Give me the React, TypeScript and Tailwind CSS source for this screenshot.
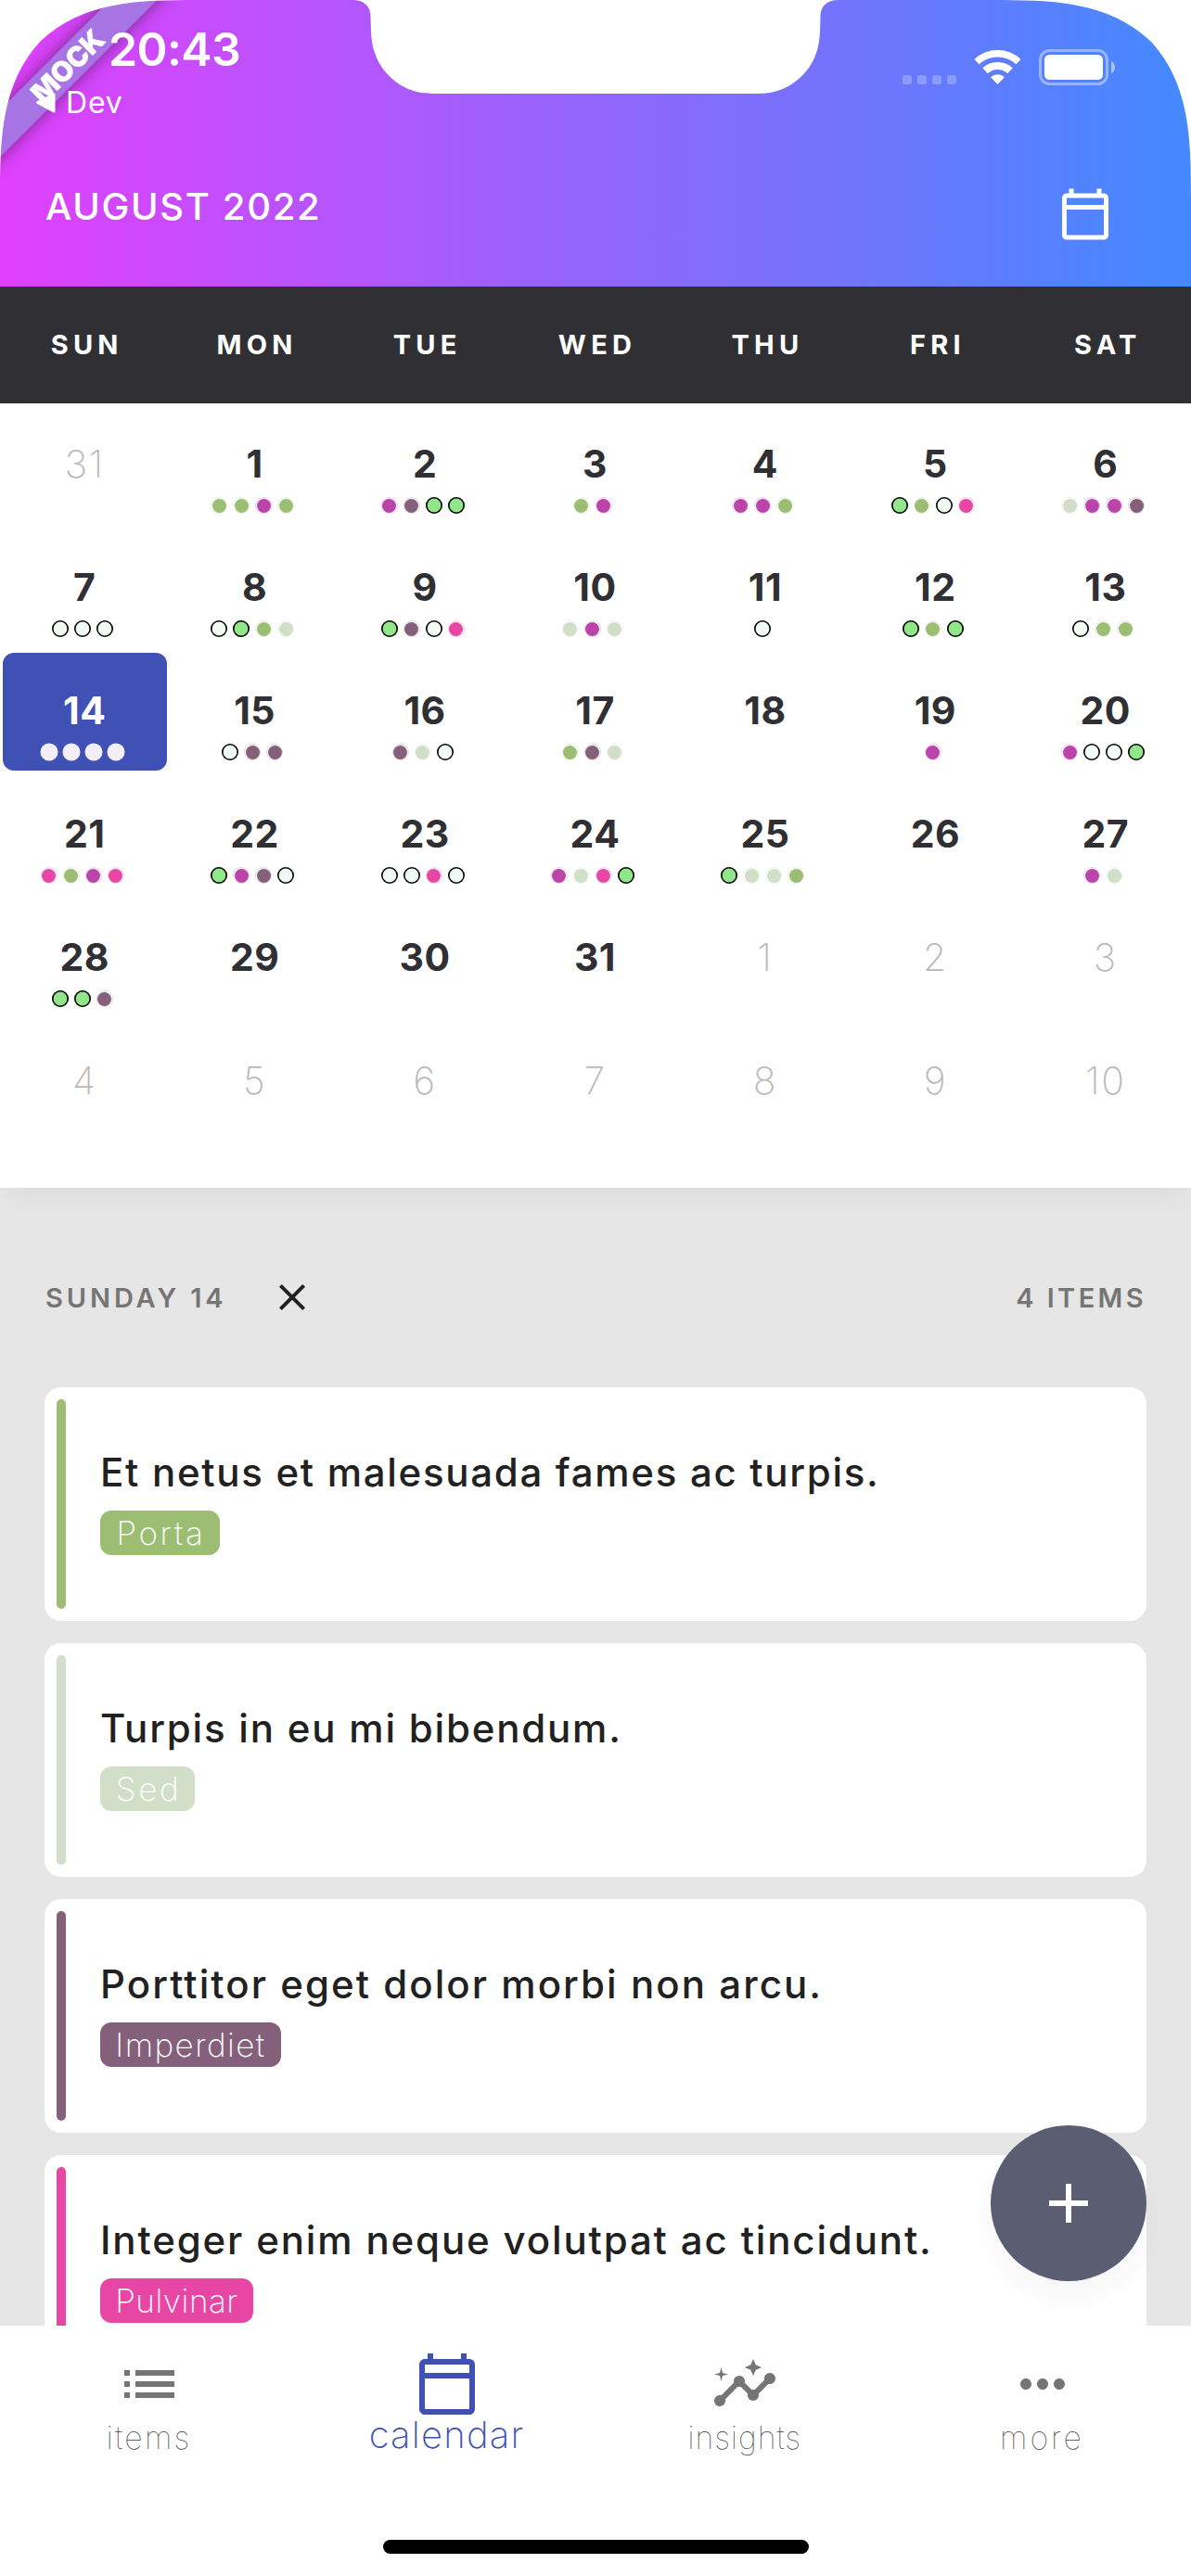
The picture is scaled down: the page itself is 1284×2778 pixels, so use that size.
import { MdAdd, MdClose, MdInsights, MdList, MdMoreHoriz } from "react-icons/md";

type Tone = "olive" | "orchid" | "plum" | "sage" | "pink" | "mint" | "hollow" | "light";

const toneRing: Record<Tone, string> = {
  olive: "border border-[#9bbe72]/25",
  orchid: "border border-[#bb44ab]/25",
  plum: "border border-[#85607b]/25",
  sage: "border border-[#d1dfc8]/40",
  pink: "border border-[#e846a5]/25",
  mint: "bg-[#92e68a] shadow-[inset_0_0_0_1.6px_#000]",
  hollow: "bg-[#f3fcf4] shadow-[inset_0_0_0_1.6px_#000]",
  light: "bg-[#f2eff6] shadow-[0_0_0_0.5px_#f2eff6]",
};

const toneCore: Record<Tone, string> = {
  olive: "bg-[#9bbe72]",
  orchid: "bg-[#bb44ab]",
  plum: "bg-[#85607b]",
  sage: "bg-[#d1dfc8]",
  pink: "bg-[#e846a5]",
  mint: "hidden",
  hollow: "hidden",
  light: "hidden",
};

const codes: Record<string, Tone> = {
  o: "olive", r: "orchid", p: "plum", s: "sage", k: "pink", m: "mint", h: "hollow", w: "light",
};

const weekdays = ["SUN", "MON", "TUE", "WED", "THU", "FRI", "SAT"];

const augustDots = [
  "ooro", "rpmm", "or", "rro", "mohk", "srrp",
  "hhh", "hmos", "mphk", "srs", "h", "mom", "hoo",
  "wwww", "hpp", "psh", "ops", "", "r", "rhhm",
  "kork", "mrph", "hhkh", "rskm", "msso", "", "rs",
  "mmp", "", "", "",
];

const days = [
  { n: 31, dots: "", outside: true },
  ...augustDots.map((dots, i) => ({ n: i + 1, dots, outside: false })),
  ...Array.from({ length: 10 }, (_, i) => ({ n: i + 1, dots: "", outside: true })),
];

const items = [
  { title: "Et netus et malesuada fames ac turpis.", tracking: "tracking-[1.7px]", tag: "Porta", tagClass: "w-[129px] tracking-[2.6px] pl-[2px]", bg: "bg-[#9bbe72]" },
  { title: "Turpis in eu mi bibendum.", tracking: "tracking-[1.8px]", tag: "Sed", tagClass: "w-[102px] tracking-[2.6px] pl-[2px]", bg: "bg-[#d1dfc8]" },
  { title: "Porttitor eget dolor morbi non arcu.", tracking: "tracking-[2.05px]", tag: "Imperdiet", tagClass: "w-[195px] tracking-[1.4px]", bg: "bg-[#85607b]" },
  { title: "Integer enim neque volutpat ac tincidunt.", tracking: "tracking-[1.85px]", tag: "Pulvinar", tagClass: "w-[165px] tracking-[0.5px]", bg: "bg-[#e846a5]" },
];

function CalendarIcon({ className }: { className: string }) {
  return (
    <svg viewBox="0 0 24 24" fill="currentColor" className={className}>
      <path d="M20 3h-1V1h-2v2H7V1H5v2H4c-1.1 0-2 .9-2 2v16c0 1.1.9 2 2 2h16c1.1 0 2-.9 2-2V5c0-1.1-.9-2-2-2zm0 18H4V10h16v11zm0-13H4V5h16v3z" />
    </svg>
  );
}

function ScreenCutout() {
  return (
    <svg viewBox="0 0 1284 220" fill="white" className="absolute inset-x-0 top-0 h-[220px] w-[1284px]">
      <path d="M0 0V215C0 150 1 90 44 44C90 1 150 0 215 0Z" />
      <path d="M1284 0V215C1284 150 1283 90 1240 44C1194 1 1134 0 1069 0Z" />
      <path d="M380 0C393 0 399.500 7 399.500 18C400 36 400 46 404 57C411 79 431 94 446 98C455 101 465 101 475 101H809C819 101 829 101 838 98C853 94 873 79 880 57C884 46 884 36 884.500 18C884.500 7 891 0 904 0Z" />
    </svg>
  );
}

function Header() {
  return (
    <header className="relative flex h-[309px] shrink-0 flex-col overflow-hidden bg-linear-to-r/srgb from-[#e040fb] to-[#448aff] text-white">
      <div className="absolute -left-[78.500px] top-[53.500px] flex h-[36px] w-[300px] -rotate-45 items-center justify-center bg-[#a675e3] shadow-[0_0_18px_rgba(0,0,0,0.45)]">
        <span className="pl-[2px] text-[30.5px] font-black leading-none tracking-[-0.5px]">MOCK</span>
      </div>
      <ScreenCutout />
      <div className="relative flex h-[150px] justify-between pr-[82px]">
        <div className="pl-[38px] pt-[23px]">
          <div className="h-[60px] pl-[79px] text-[50px] font-semibold leading-[60px] tracking-[-0.6px]">20:43</div>
          <div className="mt-[8px] flex h-10 items-center">
            <svg viewBox="0 0 22 24" className="h-6 w-[22px]">
              <path d="M2.500 11.500L20 3V21Z" fill="white" stroke="white" strokeWidth="3" strokeLinejoin="round" />
            </svg>
            <span className="ml-[11px] text-[32px] leading-none tracking-[0.8px]">Dev</span>
          </div>
        </div>
        <div className="flex items-start">
          <div className="mt-[81px] flex gap-1.5">
            {[0, 1, 2, 3].map((i) => (
              <span key={i} className="size-2.5 rounded-[3px] bg-white/25" />
            ))}
          </div>
          <svg viewBox="0 0 51 37" className="ml-[19px] mt-[54px] h-[37px] w-[51px]" fill="none" stroke="white">
            <path d="M3 12.600A33 33 0 0 1 48 12.600" strokeWidth="7.400" />
            <path d="M12 22.200A19.800 19.800 0 0 1 39 22.200" strokeWidth="8" />
            <path d="M25.500 37L18 29.200A11 11 0 0 1 33 29.200Z" fill="white" stroke="none" />
          </svg>
          <svg viewBox="0 0 82 39" className="ml-[19px] mt-[53px] h-[39px] w-[82px]">
            <rect x="1.500" y="1.500" width="72" height="36" rx="10" fill="none" stroke="white" strokeOpacity="0.4" strokeWidth="3" />
            <rect x="6" y="6" width="63" height="27" rx="5.500" fill="white" />
            <path d="M78 13C83.300 15 83.300 24 78 26Z" fill="white" fillOpacity="0.5" />
          </svg>
        </div>
      </div>
      <div className="relative flex h-[146px] items-center justify-between pl-[49px] pr-[84px]">
        <h1 className="text-[40px] font-medium leading-none tracking-[1.65px]">AUGUST 2022</h1>
        <CalendarIcon className="mt-[15px] size-[60px]" />
      </div>
    </header>
  );
}

function Day({ n, dots, outside }: { n: number; dots: string; outside: boolean }) {
  const selected = !outside && n === 14;
  return (
    <div className="h-[133px] p-[3px]">
      <div className={`flex h-[127px] flex-col items-center rounded-[12px] pr-px pt-[38px] ${selected ? "bg-[#3f51b5]" : ""}`}>
        <span
          className={`h-12 text-[41px] leading-[48px] ${
            outside
              ? "font-extralight tracking-[1.5px] text-[#b9b9bb]"
              : selected
                ? "font-bold tracking-[0.5px] text-white"
                : "font-bold tracking-[0.5px] text-[#302f34]"
          }`}
        >
          {n}
        </span>
        <div className="mt-[12px] flex gap-1.5 pr-[5px]">
          {dots.split("").map((c, i) => (
            <span key={i} className={`flex size-[18px] items-center justify-center rounded-full ${toneRing[codes[c]]}`}>
              <span className={`size-[15px] shrink-0 rounded-full ${toneCore[codes[c]]}`} />
            </span>
          ))}
        </div>
      </div>
    </div>
  );
}

export default function App() {
  return (
    <div className="relative flex h-[2778px] w-[1284px] flex-col overflow-hidden bg-white font-['Inter',sans-serif]">
      <Header />
      <div className="grid h-[126px] shrink-0 grid-cols-7 items-center bg-[#302f34] pb-[2px] text-center text-[29px] font-bold text-white">
        {weekdays.map((d) => (
          <span key={d} className="pl-[4px] leading-none tracking-[5.2px]">{d}</span>
        ))}
      </div>
      <section className="relative z-10 grid h-[846px] shrink-0 grid-cols-7 content-start bg-white shadow-[0_12px_28px_-6px_rgba(0,0,0,0.05)]">
        {days.map((d, i) => (
          <Day key={i} {...d} />
        ))}
      </section>
      <main className="h-[1227px] shrink-0 overflow-hidden bg-[#e6e6e6] px-12">
        <div className="mb-[73px] mt-[94px] flex h-12 items-center text-[29px] font-semibold leading-none text-[#757575]">
          <span className="w-[243px] pl-px tracking-[3.9px]">SUNDAY 14</span>
          <MdClose className="size-12 text-[#212121]" />
          <span className="ml-auto tracking-[3.4px]">4 ITEMS</span>
        </div>
        <div className="flex flex-col gap-6">
          {items.map((it) => (
            <article key={it.title} className="flex h-[252px] rounded-[18px] bg-white py-[13px] pl-[13px]">
              <div className={`h-[226px] w-2.5 rounded-full ${it.bg}`} />
              <div className="pl-[37px] pt-[53px]">
                <h2 className={`h-[52px] whitespace-nowrap text-[42px] font-[450] leading-[52px] text-[#212121] ${it.tracking}`}>{it.title}</h2>
                <span className={`mt-[15px] flex h-12 items-center justify-center rounded-[12px] pt-px text-[35px] font-extralight leading-none text-white ${it.bg} ${it.tagClass}`}>
                  {it.tag}
                </span>
              </div>
            </article>
          ))}
        </div>
      </main>
      <button className="absolute left-[1068px] top-[2292px] z-20 flex size-[168px] items-center justify-center rounded-full bg-[#5b5e72] shadow-[0_18px_30px_rgba(60,60,90,0.04)]">
        <MdAdd className="size-[72px] text-white" />
      </button>
      <nav className="relative flex h-[270px] shrink-0 flex-col items-center bg-white">
        <div className="grid w-full grid-cols-4 pt-[27px] text-[34px] font-thin text-[#424242]">
          <div className="flex flex-col items-center">
            <MdList className="size-[72px] text-[#757575]" />
            <span className="h-10 leading-[44px] tracking-[2.2px]">items</span>
          </div>
          <div className="flex flex-col items-center text-[#3f51b5]">
            <CalendarIcon className="size-[72px]" />
            <span className="-mt-px h-10 text-[40px] font-[150] leading-10 tracking-[1.2px]">calendar</span>
          </div>
          <div className="flex flex-col items-center">
            <MdInsights className="size-[72px] text-[#757575]" />
            <span className="h-10 leading-[44px] tracking-[0.9px]">insights</span>
          </div>
          <div className="flex flex-col items-center">
            <MdMoreHoriz className="size-[72px] text-[#757575]" />
            <span className="h-10 leading-[44px] tracking-[3px]">more</span>
          </div>
        </div>
        <div className="mb-6 mt-auto h-[15px] w-[459px] rounded-full bg-black" />
      </nav>
    </div>
  );
}
